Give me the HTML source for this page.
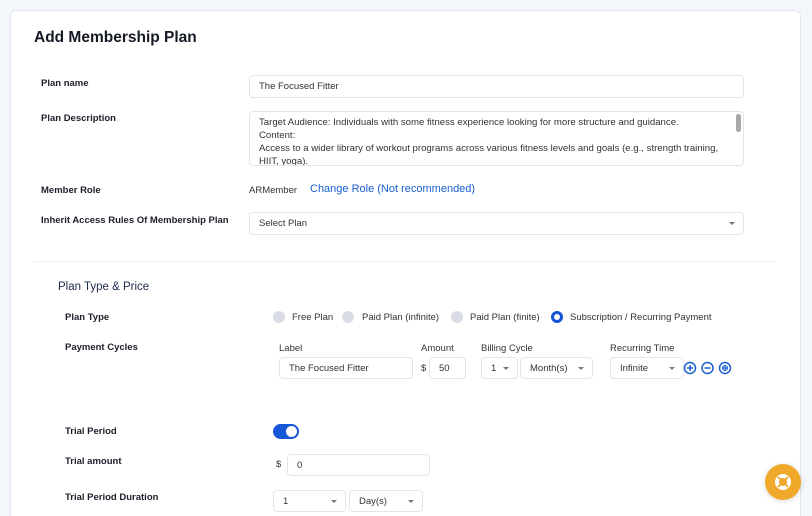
<!DOCTYPE html>
<html style="width:812px;height:516px;overflow:hidden"><head><style>
*{box-sizing:border-box;margin:0;padding:0}
body{width:812px;height:516px;overflow:hidden;background:#f3f6fb;font-family:"Liberation Sans",sans-serif;color:#1f2330;position:relative}
.card{position:absolute;left:10px;top:10px;width:791px;height:506px;background:#fff;border:1px solid #e3e8f0;border-bottom:0;border-radius:6px 6px 0 0}
.a{position:absolute;white-space:nowrap}
.lbl{font-size:9.5px;font-weight:bold;color:#1c1f2a}
.box{position:absolute;border:1px solid #e2e5eb;border-radius:4px;background:#fff;font-size:9.5px;color:#333;padding-left:9px;display:flex;align-items:center}
.car{position:absolute;right:8px;top:50%;margin-top:-1.5px;width:0;height:0;border-left:3px solid transparent;border-right:3px solid transparent;border-top:3.5px solid #777}
.sm{font-size:9.5px;color:#333}
.rad{position:absolute;width:12px;height:12px;border-radius:50%;background:#dadde6}
</style></head><body>
<div class="card"></div>
<div class="a" style="left:34px;top:29px;font-size:15.5px;font-weight:bold;color:#161a26">Add Membership Plan</div>

<div class="a lbl" style="left:41px;top:78px">Plan name</div>
<div class="box" style="left:249px;top:75px;width:495px;height:23px">The Focused Fitter</div>

<div class="a lbl" style="left:41px;top:113px">Plan Description</div>
<div class="box" style="left:249px;top:111px;width:495px;height:55px;align-items:flex-start;padding-top:4px;padding-right:20px;line-height:13px;white-space:normal;overflow:hidden">
<div style="font-size:9.6px">Target Audience: Individuals with some fitness experience looking for more structure and guidance.<br>Content:<br>Access to a wider library of workout programs across various fitness levels and goals (e.g., strength training, HIIT, yoga).</div>
<div style="position:absolute;right:2px;top:2px;width:5px;height:18px;background:#a8a8a8;border-radius:3px"></div>
</div>

<div class="a lbl" style="left:41px;top:185px">Member Role</div>
<div class="a sm" style="left:249px;top:185px">ARMember</div>
<div class="a" style="left:310px;top:183px;font-size:11px;color:#1a5fd0">Change Role (Not recommended)</div>

<div class="a lbl" style="left:41px;top:215px">Inherit Access Rules Of Membership Plan</div>
<div class="box" style="left:249px;top:212px;width:495px;height:23px">Select Plan<span class="car"></span></div>

<div class="a" style="left:34px;top:261px;width:742px;height:1px;background:#eceff3"></div>

<div class="a" style="left:58px;top:281px;font-size:11.5px;color:#1e2a4a">Plan Type &amp; Price</div>

<div class="a lbl" style="left:65px;top:312px">Plan Type</div>
<div class="rad" style="left:273px;top:311px"></div><div class="a sm" style="left:292px;top:312px">Free Plan</div>
<div class="rad" style="left:342px;top:311px"></div><div class="a sm" style="left:362px;top:312px">Paid Plan (infinite)</div>
<div class="rad" style="left:451px;top:311px"></div><div class="a sm" style="left:470px;top:312px">Paid Plan (finite)</div>
<div class="rad" style="left:551px;top:311px;background:#fff;border:3.5px solid #1557d6"></div><div class="a sm" style="left:570px;top:312px">Subscription / Recurring Payment</div>

<div class="a lbl" style="left:65px;top:342px">Payment Cycles</div>
<div class="a sm" style="left:279px;top:343px">Label</div>
<div class="box" style="left:279px;top:357px;width:134px;height:22px">The Focused Fitter</div>
<div class="a sm" style="left:421px;top:343px">Amount</div>
<div class="a sm" style="left:421px;top:363px">$</div>
<div class="box" style="left:429px;top:357px;width:37px;height:22px">50</div>
<div class="a sm" style="left:481px;top:343px">Billing Cycle</div>
<div class="box" style="left:481px;top:357px;width:37px;height:22px">1<span class="car"></span></div>
<div class="box" style="left:520px;top:357px;width:73px;height:22px">Month(s)<span class="car"></span></div>
<div class="a sm" style="left:610px;top:343px">Recurring Time</div>
<div class="box" style="left:610px;top:357px;width:74px;height:22px">Infinite<span class="car"></span></div>
<svg class="a" style="left:683px;top:361px" width="50" height="14" viewBox="0 0 50 14" fill="none" stroke="#1a5fd0" stroke-width="1.5">
<circle cx="7" cy="7" r="5.5"/><path d="M4 7h6M7 4v6"/>
<circle cx="24.5" cy="7" r="5.5"/><path d="M21.5 7h6"/>
<circle cx="42" cy="7" r="5.5"/><path d="M39 7h6M42 4v6" stroke-width="1.2"/><circle cx="42" cy="7" r="2.5" stroke-width="1"/>
</svg>

<div class="a lbl" style="left:65px;top:426px">Trial Period</div>
<div class="a" style="left:273px;top:424px;width:26px;height:15px;border-radius:8px;background:#1557d6"><div style="position:absolute;right:2px;top:2px;width:11px;height:11px;border-radius:50%;background:#fff"></div></div>

<div class="a lbl" style="left:65px;top:456px">Trial amount</div>
<div class="a sm" style="left:276px;top:459px">$</div>
<div class="box" style="left:287px;top:454px;width:143px;height:22px">0</div>

<div class="a lbl" style="left:65px;top:492px">Trial Period Duration</div>
<div class="box" style="left:273px;top:490px;width:73px;height:22px">1<span class="car"></span></div>
<div class="box" style="left:349px;top:490px;width:74px;height:22px">Day(s)<span class="car"></span></div>

<div class="a" style="left:765px;top:464px;width:36px;height:36px;border-radius:50%;background:#f0a92a;box-shadow:0 1px 6px rgba(0,0,0,.15)">
<svg width="36" height="36" viewBox="0 0 36 36"><circle cx="18" cy="18" r="6" fill="none" stroke="#fff" stroke-width="4"/><g stroke="#f0a92a" stroke-width="1.8"><path d="M13 13l3 3M23 13l-3 3M13 23l3-3M23 23l-3-3"/></g></svg>
</div>
</body></html>
